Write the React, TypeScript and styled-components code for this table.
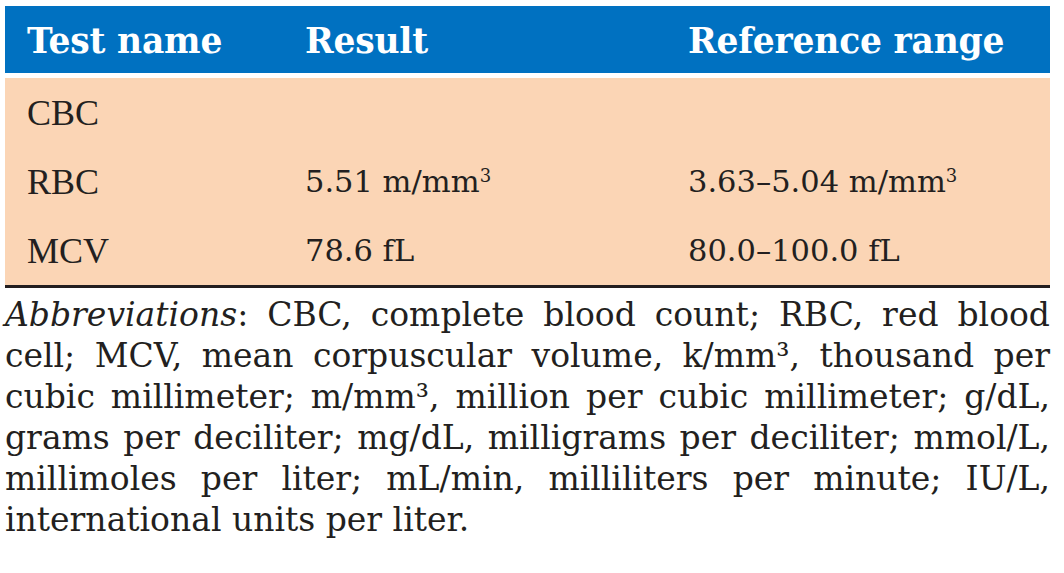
import React from "react";
import styled, { createGlobalStyle } from "styled-components";

const Global = createGlobalStyle`
  html, body { margin: 0; padding: 0; background: #ffffff; }
  body { width: 1064px; height: 573px; overflow: hidden; }
`;

const Page = styled.div`
  padding: 6px 14px 0 5px;
  font-family: "DejaVu Serif", "Liberation Serif", serif;
  color: #231f20;
`;

const Table = styled.div`
  display: flex;
  flex-direction: column;
  gap: 5px;
  border-bottom: 3px solid #231f20;
`;

const HeaderRow = styled.div`
  display: grid;
  grid-template-columns: 278px 383px 1fr;
  align-items: center;
  height: 67px;
  padding: 3px 0 0 22px;
  box-sizing: border-box;
  background: #0071c1;
  color: #ffffff;
  font-weight: bold;
  font-size: 34.5px;
  letter-spacing: -0.2px;
`;

const Body = styled.div`
  display: flex;
  flex-direction: column;
  background: #fbd5b5;
`;

const Row = styled.div`
  display: grid;
  grid-template-columns: 278px 383px 1fr;
  align-items: center;
  height: 69px;
  padding-left: 22px;
`;

const Name = styled.span`
  font-family: "Liberation Serif", serif;
  font-size: 36px;
`;

const Value = styled.span`
  font-size: 30.5px;
`;

const Sup = styled.span`
  font-size: 18px;
  vertical-align: 10px;
`;

const Note = styled.div`
  padding-top: 6px;
  font-size: 33px;
  line-height: 41px;
`;

const Line = styled.div<{ $last?: boolean }>`
  text-align: justify;
  text-align-last: ${(p) => (p.$last ? "left" : "justify")};
`;

const rows = [
  { name: "CBC", result: null, range: null },
  { name: "RBC", result: ["5.51 m/mm", "3"], range: ["3.63–5.04 m/mm", "3"] },
  { name: "MCV", result: ["78.6 fL", ""], range: ["80.0–100.0 fL", ""] },
];

export default function App() {
  return (
    <>
      <Global />
      <Page>
        <Table>
          <HeaderRow>
            <span>Test name</span>
            <span>Result</span>
            <span>Reference range</span>
          </HeaderRow>
          <Body>
            {rows.map((r) => (
              <Row key={r.name}>
                <Name>{r.name}</Name>
                <Value>
                  {r.result && (
                    <>
                      {r.result[0]}
                      {r.result[1] && <Sup>{r.result[1]}</Sup>}
                    </>
                  )}
                </Value>
                <Value>
                  {r.range && (
                    <>
                      {r.range[0]}
                      {r.range[1] && <Sup>{r.range[1]}</Sup>}
                    </>
                  )}
                </Value>
              </Row>
            ))}
          </Body>
        </Table>
        <Note>
          <Line>
            <i>Abbreviations</i>: CBC, complete blood count; RBC, red blood
          </Line>
          <Line>cell; MCV, mean corpuscular volume, k/mm³, thousand per</Line>
          <Line>cubic millimeter; m/mm³, million per cubic millimeter; g/dL,</Line>
          <Line>grams per deciliter; mg/dL, milligrams per deciliter; mmol/L,</Line>
          <Line>millimoles per liter; mL/min, milliliters per minute; IU/L,</Line>
          <Line $last>international units per liter.</Line>
        </Note>
      </Page>
    </>
  );
}
